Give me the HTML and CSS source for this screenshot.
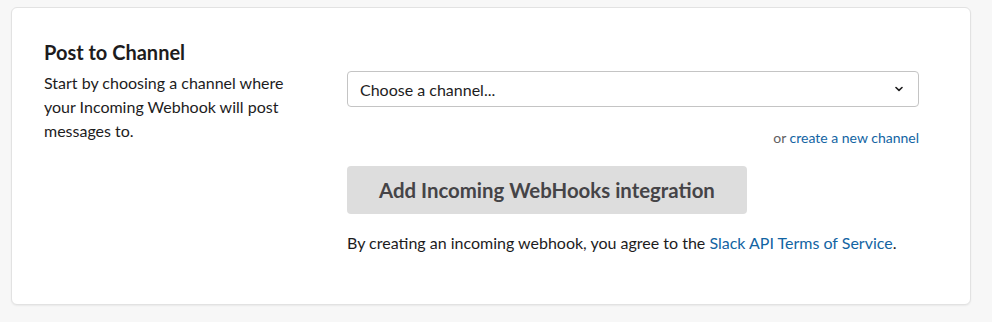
FILE: index.html
```html
<!DOCTYPE html>
<html lang="en">
<head>
    <meta charset="UTF-8">
    <meta name="viewport" content="width=device-width, initial-scale=1.0">
    <title>Incoming WebHooks</title>
    <link rel="stylesheet" href="styles.css">
</head>
<body>
    <div class="card">
        <h2>Post to Channel</h2>
        <div class="row">
            <p class="desc">Start by choosing a channel where your Incoming Webhook will post messages to.</p>
            <form class="setup" action="#" method="post">
                <div class="select">
                    <span>Choose a channel...</span>
                    <svg class="chevron" width="8" height="6" viewBox="0 0 8 6">
                        <path d="M1 1.5 L4 4.3 L7 1.5" fill="none" stroke="#1d1c1d" stroke-width="1.6" stroke-linecap="round" stroke-linejoin="round"/>
                    </svg>
                </div>
                <p class="new-channel">or <a href="#">create a new channel</a></p>
                <button type="button">Add Incoming WebHooks integration</button>
                <p class="terms">By creating an incoming webhook, you agree to the <a href="#">Slack API Terms of Service</a>.</p>
            </form>
        </div>
    </div>
</body>
</html>
```

FILE: styles.css
```css
body {
    margin: 0;
    padding: 7px 21px 17px 11px;
    background-color: #f7f7f7;
    font-family: Lato, "Open Sans", sans-serif;
    color: #1d1c1d;
}

.card {
    background-color: #fff;
    border: 1px solid #e2e2e2;
    border-radius: 6px;
    box-shadow: 0 1px 2px rgba(0, 0, 0, 0.06);
    padding: 32px 51px 49px 32px;
}

h2 {
    margin: 0 0 7px;
    font-size: 20px;
    line-height: 24px;
    font-weight: 700;
}

.row {
    display: flex;
}

.desc {
    width: 250px;
    margin: 0 53px 0 0;
    font-size: 16px;
    line-height: 24px;
}

.setup {
    flex: 1;
}

.select {
    display: flex;
    align-items: center;
    justify-content: space-between;
    height: 34px;
    padding: 0 15px 0 12px;
    border: 1px solid #c4c4c4;
    border-radius: 4px;
    font-size: 16px;
}

.new-channel {
    margin: 21px 0 18px;
    text-align: right;
    font-size: 14px;
    line-height: 20px;
    color: #616061;
}

a {
    color: #1264a3;
    text-decoration: none;
}

button {
    height: 48px;
    padding: 0 32px;
    border: none;
    border-radius: 4px;
    background-color: #dddddd;
    color: #454447;
    font-family: inherit;
    font-size: 20.4px;
    font-weight: 700;
}

.terms {
    margin: 17px 0 0;
    font-size: 16px;
    line-height: 24px;
}
```
